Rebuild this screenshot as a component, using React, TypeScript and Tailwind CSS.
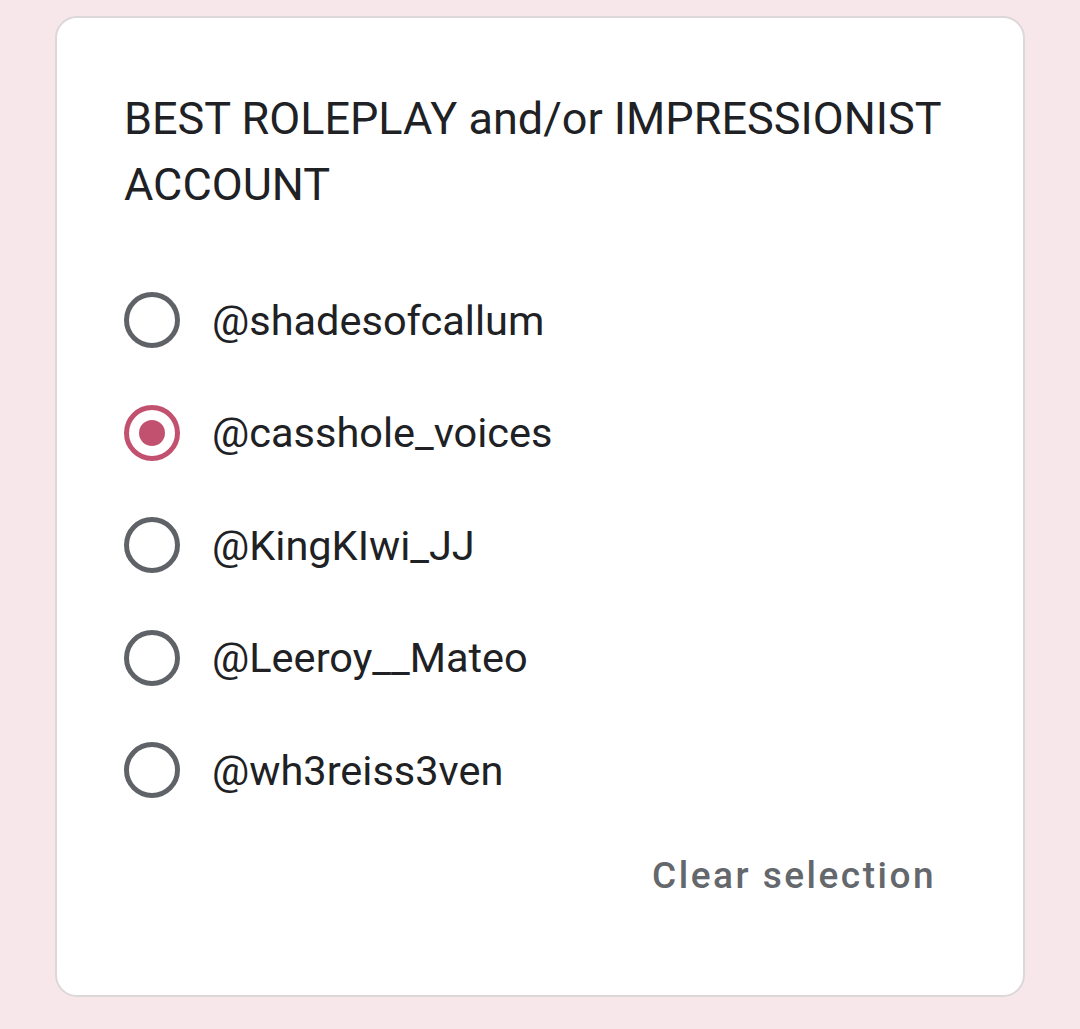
import { useState } from 'react';

const options = ['@shadesofcallum', '@casshole_voices', '@KingKIwi_JJ', '@Leeroy__Mateo', '@wh3reiss3ven'];

export default function App() {
  const [selected, setSelected] = useState<number | null>(1);

  return (
    <div className="min-h-[1029px] w-full bg-[#f8e7ea] pt-[16px] pl-[55px] pr-[55px] font-['Roboto',sans-serif]">
      <div className="h-[981px] rounded-[22px] border-2 border-[#dcd7d9] bg-white pl-[67px] pr-[63px] pt-[68px]">
        <h1 className="text-[45px] leading-[66px] text-[#202124]">
          BEST ROLEPLAY and/or IMPRESSIONIST ACCOUNT
        </h1>

        <div className="mt-[46px] flex flex-col">
          {options.map((o, i) => {
            const on = selected === i;
            return (
              <label
                key={o}
                className="flex h-[112.5px] cursor-pointer items-center"
                onClick={() => setSelected(i)}
              >
                <span
                  className={
                    on
                      ? 'flex h-[56px] w-[56px] shrink-0 items-center justify-center rounded-full border-[5px] border-[#c2516f]'
                      : 'flex h-[56px] w-[56px] shrink-0 items-center justify-center rounded-full border-[5px] border-[#5f6368]'
                  }
                >
                  {on && <span className="h-[26px] w-[26px] rounded-full bg-[#c2516f]" />}
                </span>
                <span className="ml-[32px] text-[41.5px] leading-none text-[#202124]">{o}</span>
              </label>
            );
          })}
        </div>

        <div className="mt-[16px] flex justify-end">
          <button
            className="h-[66px] rounded-[6px] pl-[26px] pr-[24px] text-[37px] font-medium tracking-[2.5px] text-[#64676c]"
            onClick={() => setSelected(null)}
          >
            Clear selection
          </button>
        </div>
      </div>
    </div>
  );
}
